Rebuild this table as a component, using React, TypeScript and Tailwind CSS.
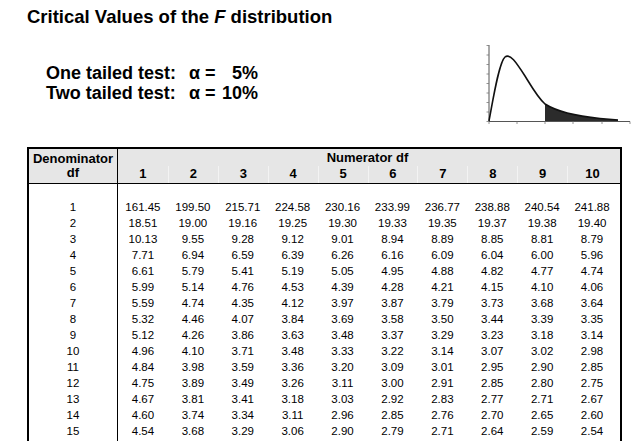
import React from 'react'

const rows: [number, string[]][] = [
  [1, ['161.45', '199.50', '215.71', '224.58', '230.16', '233.99', '236.77', '238.88', '240.54', '241.88']],
  [2, ['18.51', '19.00', '19.16', '19.25', '19.30', '19.33', '19.35', '19.37', '19.38', '19.40']],
  [3, ['10.13', '9.55', '9.28', '9.12', '9.01', '8.94', '8.89', '8.85', '8.81', '8.79']],
  [4, ['7.71', '6.94', '6.59', '6.39', '6.26', '6.16', '6.09', '6.04', '6.00', '5.96']],
  [5, ['6.61', '5.79', '5.41', '5.19', '5.05', '4.95', '4.88', '4.82', '4.77', '4.74']],
  [6, ['5.99', '5.14', '4.76', '4.53', '4.39', '4.28', '4.21', '4.15', '4.10', '4.06']],
  [7, ['5.59', '4.74', '4.35', '4.12', '3.97', '3.87', '3.79', '3.73', '3.68', '3.64']],
  [8, ['5.32', '4.46', '4.07', '3.84', '3.69', '3.58', '3.50', '3.44', '3.39', '3.35']],
  [9, ['5.12', '4.26', '3.86', '3.63', '3.48', '3.37', '3.29', '3.23', '3.18', '3.14']],
  [10, ['4.96', '4.10', '3.71', '3.48', '3.33', '3.22', '3.14', '3.07', '3.02', '2.98']],
  [11, ['4.84', '3.98', '3.59', '3.36', '3.20', '3.09', '3.01', '2.95', '2.90', '2.85']],
  [12, ['4.75', '3.89', '3.49', '3.26', '3.11', '3.00', '2.91', '2.85', '2.80', '2.75']],
  [13, ['4.67', '3.81', '3.41', '3.18', '3.03', '2.92', '2.83', '2.77', '2.71', '2.67']],
  [14, ['4.60', '3.74', '3.34', '3.11', '2.96', '2.85', '2.76', '2.70', '2.65', '2.60']],
  [15, ['4.54', '3.68', '3.29', '3.06', '2.90', '2.79', '2.71', '2.64', '2.59', '2.54']],
]

const numerators = [1, 2, 3, 4, 5, 6, 7, 8, 9, 10]

// small sketch of the F density with the upper tail shaded
function FCurve() {
  const yTicks = [45.5, 55, 64.5, 74, 83.5, 93, 102.5, 112, 121.5]
  const xTicks = [489, 517, 545, 573, 602, 630]
  return (
    <svg width="151" height="90" viewBox="480 40 151 90" className="block">
      <path
        d="M545,121 L545,104 C556,111 575,116 600,118.5 L618,120 L618,121 Z"
        fill="#2b2b2b"
      />
      <line x1="489" y1="45" x2="489" y2="121.5" stroke="#555" strokeWidth="1" />
      <line x1="489" y1="121.5" x2="630" y2="121.5" stroke="#555" strokeWidth="1" />
      {yTicks.map((y) => (
        <line key={y} x1="486.5" y1={y} x2="489" y2={y} stroke="#777" strokeWidth="0.8" />
      ))}
      {xTicks.map((x) => (
        <line key={x} x1={x} y1="121.5" x2={x} y2="124" stroke="#777" strokeWidth="0.8" />
      ))}
      <path
        d="M489,121 C493,100 499,62 505,57 C510,53 516,62 525,76 C533,89 538,98 545,104 C556,111 575,116 600,118.5 L618,120"
        fill="none"
        stroke="#111"
        strokeWidth="1.6"
      />
    </svg>
  )
}

export default function App() {
  return (
    <div className="h-[441px] w-[631px] overflow-hidden bg-white text-black font-['Liberation_Sans',Arial,sans-serif]">
      {/* Heading area */}
      <div className="flex h-[147px]">
        <div className="pl-[27px] pt-[6px]">
          <h1 className="text-[18.5px] font-bold leading-[22px] whitespace-nowrap">
            Critical Values of the <span className="italic">F</span> distribution
          </h1>
          <div className="ml-[19px] mt-[35px] text-[18px] font-bold leading-[20px]">
            <div className="flex w-[212px] whitespace-nowrap">
              <span className="w-[143px]">One tailed test:</span>
              <span>α =</span>
              <span className="ml-auto">5%</span>
            </div>
            <div className="flex w-[212px] whitespace-nowrap">
              <span className="w-[143px]">Two tailed test:</span>
              <span>α =</span>
              <span className="ml-auto">10%</span>
            </div>
          </div>
        </div>
        <div className="ml-auto mt-[40px]">
          <FCurve />
        </div>
      </div>

      {/* Table */}
      <div className="ml-[27px] w-[595px] border-x-2 border-t-2 border-black pb-6">
        <div className="grid grid-cols-[89px_repeat(10,minmax(0,1fr))] grid-rows-[17px_17px] border-b border-black bg-[#e6e6e6] pr-[3px] text-[13px] font-bold leading-[14px]">
          <div className="row-span-2 border-r border-black pt-[3px] text-center">
            <div>Denominator</div>
            <div>df</div>
          </div>
          <div className="col-span-10 pt-[2px] text-center">Numerator df</div>
          {numerators.map((n, i) => (
            <div
              key={n}
              className={`pt-[1px] text-center ${i > 0 ? 'border-l border-[#f3f3f3]' : ''}`}
            >
              {n}
            </div>
          ))}
        </div>

        <div className="text-[11.5px] leading-[16px]">
          <div className="grid h-[15px] grid-cols-[89px_repeat(10,minmax(0,1fr))] pr-[3px]">
            <div className="border-r border-black" />
          </div>
          {rows.map(([df, vals]) => (
            <div key={df} className="grid grid-cols-[89px_repeat(10,minmax(0,1fr))] pr-[3px]">
              <div className="border-r border-black text-center">{df}</div>
              {vals.map((v, i) => (
                <div key={i} className="text-center">
                  {v}
                </div>
              ))}
            </div>
          ))}
          <div className="grid h-[16px] grid-cols-[89px_repeat(10,minmax(0,1fr))] pr-[3px]">
            <div className="border-r border-black" />
          </div>
        </div>
      </div>
    </div>
  )
}
